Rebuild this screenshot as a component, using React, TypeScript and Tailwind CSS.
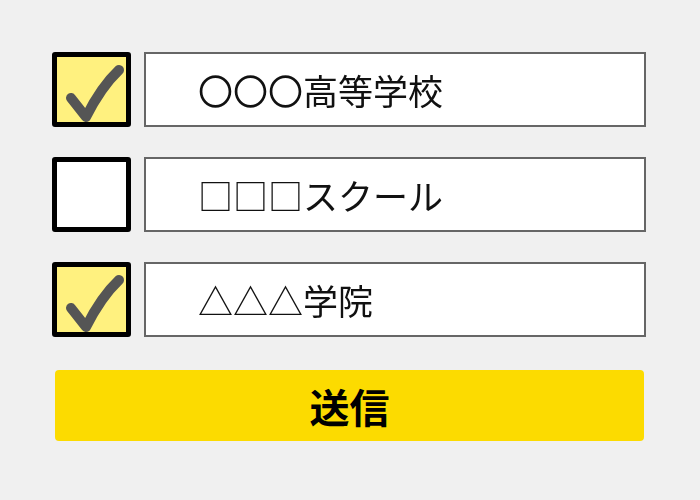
import React from 'react';

const rows = [
  { label: '〇〇〇高等学校', checked: true },
  { label: '□□□スクール', checked: false },
  { label: '△△△学院', checked: true },
];

function CheckMark() {
  return (
    <svg width="69" height="65" viewBox="0 0 69 65" className="block">
      <path
        d="M14 41 L29 60 Q44 30 62 13"
        fill="none"
        stroke="#555555"
        strokeWidth="10"
        strokeLinecap="round"
        strokeLinejoin="round"
      />
    </svg>
  );
}

export default function App() {
  return (
    <div
      className="w-[700px] h-[500px] bg-[#f0f0f0] pt-[52px] pl-[52px] antialiased"
      style={{ fontFamily: '"Noto Sans CJK JP", "Noto Sans", sans-serif' }}
    >
      <div className="w-[594px] flex flex-col gap-[30px]">
        {rows.map((r) => (
          <div key={r.label} className="flex items-center gap-[13px] h-[75px]">
            <div
              className={
                r.checked
                  ? 'w-[79px] h-[75px] border-[5px] border-black rounded-[3px] bg-[#fff17f] flex items-center justify-center'
                  : 'w-[79px] h-[75px] border-[5px] border-black rounded-[3px] bg-white'
              }
            >
              {r.checked && <CheckMark />}
            </div>
            <div className="w-[502px] h-[75px] border-2 border-[#666666] bg-white flex items-center pl-[52px]">
              <span className="text-[35px] leading-none text-[#111111] will-change-transform">{r.label}</span>
            </div>
          </div>
        ))}
        <button className="mt-[3px] ml-[3px] mr-[2px] h-[71px] rounded-[4px] bg-[#fcdb00] flex items-center justify-center">
          <span className="text-[40px] font-bold leading-none text-black">送信</span>
        </button>
      </div>
    </div>
  );
}
